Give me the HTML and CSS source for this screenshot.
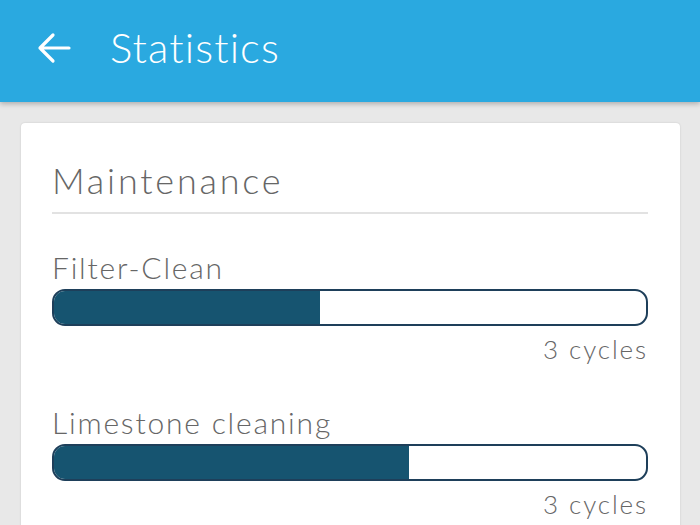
FILE: index.html
```html
<!DOCTYPE html>
<html lang="en">
<head>
    <meta charset="UTF-8">
    <meta name="viewport" content="width=device-width, initial-scale=1.0">
    <title>Statistics</title>
    <link rel="stylesheet" href="styles.css">
</head>
<body>
    <header class="app-bar">
        <button class="back-btn" type="button" aria-label="Back">
            <svg width="34" height="32" viewBox="0 0 34 32">
                <path d="M3 16 H32 M16 3 L3 16 L16 29" fill="none" stroke="#fff" stroke-width="3.2" stroke-linecap="round" stroke-linejoin="round"/>
            </svg>
        </button>
        <h1>Statistics</h1>
    </header>

    <div class="container">
        <div class="card">
            <h2 class="card-title">Maintenance</h2>

            <div class="stat">
                <div class="stat-label">Filter-Clean</div>
                <div class="bar"><div class="bar-fill" style="width: 45%;"></div></div>
                <div class="stat-value">3 cycles</div>
            </div>

            <div class="stat">
                <div class="stat-label">Limestone cleaning</div>
                <div class="bar"><div class="bar-fill" style="width: 60%;"></div></div>
                <div class="stat-value">3 cycles</div>
            </div>
        </div>
    </div>
</body>
</html>
```

FILE: styles.css
```css
/* Global styles */
body {
    font-family: Lato, "Open Sans", sans-serif;
    font-weight: 300;
    margin: 0;
    padding: 0;
    background-color: #e8e8e8;
    color: #666;
    height: 525px;
    overflow: hidden;
}

/* Header */
.app-bar {
    background-color: #2aa9e0;
    height: 102px;
    box-sizing: border-box;
    padding-bottom: 6px;
    display: flex;
    align-items: center;
    box-shadow: 0 2px 5px rgba(0, 0, 0, 0.25);
    position: relative;
    z-index: 2;
}

.back-btn {
    background: none;
    border: none;
    padding: 0;
    margin: 0 0 0 37px;
    width: 34px;
    height: 32px;
    display: flex;
    cursor: pointer;
}

.app-bar h1 {
    margin: 0 0 2px 39px;
    color: white;
    font-size: 42px;
    font-weight: 300;
    letter-spacing: 1.1px;
}

/* Card */
.container {
    padding: 21px 20px 0 21px;
}

.card {
    background: white;
    border-radius: 4px;
    box-shadow: 0 0 2px rgba(0, 0, 0, 0.15);
    padding: 37px 32px 20px 31px;
}

.card-title {
    margin: 0;
    font-size: 36px;
    line-height: 40px;
    font-weight: 300;
    color: #666;
    padding-bottom: 12px;
    border-bottom: 2px solid #e2e2e2;
    letter-spacing: 2.8px;
}

.stat {
    margin-top: 36px;
}

.stat + .stat {
    margin-top: 41px;
}

.stat-label {
    font-size: 30px;
    line-height: 34px;
    letter-spacing: 1.8px;
}

.bar {
    margin-top: 5px;
    height: 33px;
    border: 2px solid #1e3f5a;
    border-radius: 13px;
    overflow: hidden;
    background: white;
}

.bar-fill {
    height: 100%;
    background-color: #165470;
}

.stat-value {
    margin-top: 8px;
    text-align: right;
    font-size: 26px;
    line-height: 30px;
    letter-spacing: 1.9px;
}
```
